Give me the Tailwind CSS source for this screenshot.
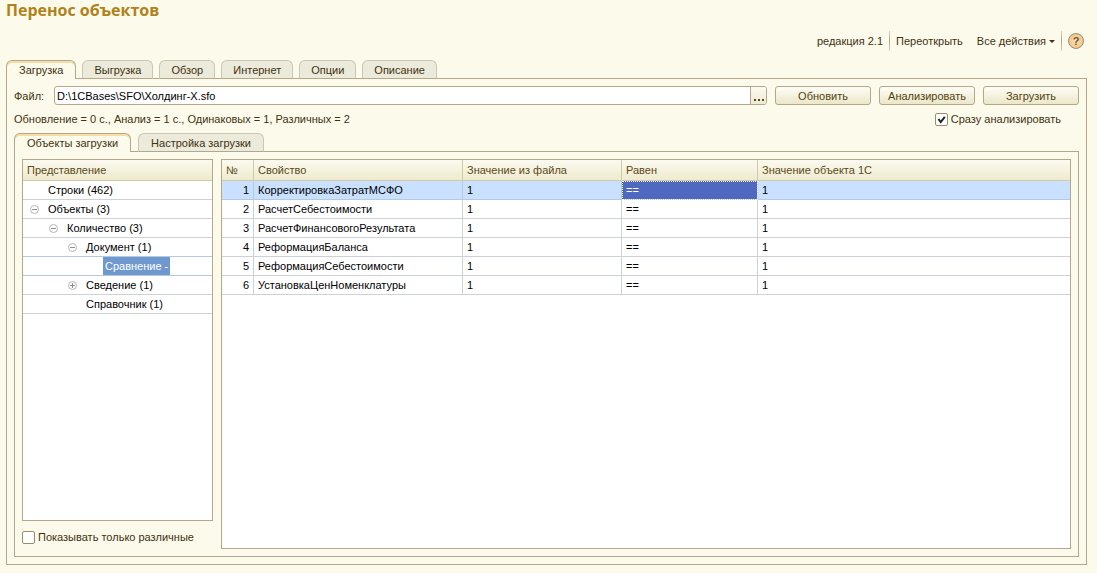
<!DOCTYPE html>
<html lang="ru">
<head>
    <meta charset="UTF-8">
    <meta name="viewport" content="width=device-width, initial-scale=1.0">
    <title>Перенос объектов</title>
    <script src="https://cdn.jsdelivr.net/npm/@tailwindcss/browser@4"></script>
</head>
<body class="bg-[#fcfaeb] font-['Liberation_Sans',Arial,sans-serif] text-[11px] leading-4 text-[#3f3211]">
    <div class="min-h-screen flex flex-col pl-[6px] pr-[10px] pb-2">
        <h1 class="font-['Open_Sans',sans-serif] font-bold text-[16px] leading-5 text-[#b08219]">Перенос объектов</h1>

        <!-- Toolbar -->
        <div class="flex items-center justify-end h-5 mt-[11px]">
            <span>редакция 2.1</span>
            <span class="w-px h-5 mx-[6px] bg-linear-to-b from-[#d8d3bc] via-[#a9a184] to-[#d8d3bc]"></span>
            <button class="mr-[14px]">Переоткрыть</button>
            <button class="flex items-center gap-[3px]">
                Все действия
                <svg class="w-[6px] h-[3px]" viewBox="0 0 6 3"><path d="M0 0h6L3 3z" fill="#3f3211"/></svg>
            </button>
            <span class="w-px h-5 mx-[6px] bg-linear-to-b from-[#d8d3bc] via-[#a9a184] to-[#d8d3bc]"></span>
            <button aria-label="Справка" class="w-4 h-4 mr-[3px] flex items-center justify-center rounded-full border border-[#9c8f7c] bg-radial from-[#fde6bd] to-[#efb567] font-bold text-[11px] text-[#6b5338]">?</button>
        </div>

        <!-- Main tabs -->
        <div class="relative flex items-end gap-[6px] mt-[9px] -mb-px">
            <button class="h-[19px] px-3 rounded-t-md border border-b-0 border-[#b3a98a] bg-[#fcfaeb] shadow-[inset_0_2px_0_#f6dca6]">Загрузка</button>
            <button class="h-[19px] px-[11px] rounded-t-md border border-[#cbc6b0] border-b-[#b3a98a] bg-[#eceadb]">Выгрузка</button>
            <button class="h-[19px] px-[11px] rounded-t-md border border-[#cbc6b0] border-b-[#b3a98a] bg-[#eceadb]">Обзор</button>
            <button class="h-[19px] px-[11px] rounded-t-md border border-[#cbc6b0] border-b-[#b3a98a] bg-[#eceadb]">Интернет</button>
            <button class="h-[19px] px-[11px] rounded-t-md border border-[#cbc6b0] border-b-[#b3a98a] bg-[#eceadb]">Опции</button>
            <button class="h-[19px] px-[11px] rounded-t-md border border-[#cbc6b0] border-b-[#b3a98a] bg-[#eceadb]">Описание</button>
        </div>

        <div class="grow flex flex-col border border-[#b3a98a] p-[7px]">
            <div class="flex items-center gap-2">
                <div class="grow flex items-center gap-[10px]">
                    <label for="file">Файл:</label>
                    <div class="grow flex h-[19px] rounded-[3px] border border-[#b3a98a] bg-white overflow-hidden">
                        <input id="file" type="text" value="D:\1CBases\SFO\Холдинг-X.sfo" class="grow min-w-0 px-[2px] text-black outline-none">
                        <button aria-label="Выбрать файл" class="w-4 flex items-end justify-center pb-[3px] border-l border-[#b3a98a] bg-linear-to-b from-[#fcfaf0] to-[#eeebd2]">
                            <svg class="w-[10px] h-[2px]" viewBox="0 0 10 2"><path d="M0 0h2v2H0zM4 0h2v2H4zM8 0h2v2H8z" fill="#5a4a1a"/></svg>
                        </button>
                    </div>
                </div>
                <button class="w-24 h-[19px] rounded-[3px] border border-[#b3a98a] bg-linear-to-b from-[#fefdf6] to-[#ebe7c9] text-[#54430f]">Обновить</button>
                <button class="w-24 h-[19px] rounded-[3px] border border-[#b3a98a] bg-linear-to-b from-[#fefdf6] to-[#ebe7c9] text-[#54430f]">Анализировать</button>
                <button class="w-24 h-[19px] rounded-[3px] border border-[#b3a98a] bg-linear-to-b from-[#fefdf6] to-[#ebe7c9] text-[#54430f]">Загрузить</button>
            </div>

            <div class="flex items-center justify-between mt-[6px] pr-[18px]">
                <span>Обновление = 0 с., Анализ = 1 с., Одинаковых = 1, Различных = 2</span>
                <label class="flex items-center gap-[3px]">
                    <span class="grid">
                        <input type="checkbox" checked class="peer col-start-1 row-start-1 appearance-none w-[13px] h-[13px] rounded-[2px] border border-[#97906f] bg-white">
                        <svg class="col-start-1 row-start-1 hidden peer-checked:block w-[13px] h-[13px] pointer-events-none" viewBox="0 0 13 13"><path d="M3.5 6l2.2 3L9.8 3.8" fill="none" stroke="#222" stroke-width="2"/></svg>
                    </span>
                    Сразу анализировать
                </label>
            </div>

            <!-- Inner tabs -->
            <div class="relative flex items-end gap-[7px] mt-[6px] -mb-px">
                <button class="h-[19px] px-3 rounded-t-md border border-b-0 border-[#b3a98a] bg-[#fcfaeb] shadow-[inset_0_2px_0_#f6dca6]">Объекты загрузки</button>
                <button class="h-[19px] px-3 rounded-t-md border border-[#cbc6b0] border-b-[#b3a98a] bg-[#eceadb]">Настройка загрузки</button>
            </div>

            <div class="grow flex gap-2 border border-[#b3a98a] p-[7px]">
                <div class="w-[191px] shrink-0 flex flex-col">
                    <div class="grow border border-[#b3a98a] bg-white text-black">
                        <div class="h-[21px] px-1 leading-5 border-b border-[#cfc9ae] bg-linear-to-b from-[#fbfaf0] to-[#efeacb] text-[#5a4a1a]">Представление</div>
                        <ul>
                            <li class="flex items-center h-[19px] pl-[25px] border-b border-[#cdd2d8]">Строки (462)</li>
                            <li class="flex items-center gap-[9px] h-[19px] pl-[7px] border-b border-[#cdd2d8]">
                                <button aria-label="Свернуть"><svg class="w-[9px] h-[9px]" viewBox="0 0 9 9" fill="none" stroke="#8f8f8f"><circle cx="4.5" cy="4.5" r="4" stroke="#b4b4b4"/><path d="M2 4.5h5"/></svg></button>
                                Объекты (3)
                            </li>
                            <li class="flex items-center gap-[9px] h-[19px] pl-[26px] border-b border-[#cdd2d8]">
                                <button aria-label="Свернуть"><svg class="w-[9px] h-[9px]" viewBox="0 0 9 9" fill="none" stroke="#8f8f8f"><circle cx="4.5" cy="4.5" r="4" stroke="#b4b4b4"/><path d="M2 4.5h5"/></svg></button>
                                Количество (3)
                            </li>
                            <li class="flex items-center gap-[9px] h-[19px] pl-[45px] border-b border-[#b3cbe0]">
                                <button aria-label="Свернуть"><svg class="w-[9px] h-[9px]" viewBox="0 0 9 9" fill="none" stroke="#8f8f8f"><circle cx="4.5" cy="4.5" r="4" stroke="#b4b4b4"/><path d="M2 4.5h5"/></svg></button>
                                Документ (1)
                            </li>
                            <li class="flex items-center h-[19px] pl-20 border-b border-[#b3cbe0]"><span class="h-[18px] px-[2px] leading-[18px] bg-[#6f98cf] text-white">Сравнение -</span></li>
                            <li class="flex items-center gap-[9px] h-[19px] pl-[45px] border-b border-[#cdd2d8]">
                                <button aria-label="Развернуть"><svg class="w-[9px] h-[9px]" viewBox="0 0 9 9" fill="none" stroke="#8f8f8f"><circle cx="4.5" cy="4.5" r="4" stroke="#b4b4b4"/><path d="M2 4.5h5M4.5 2v5"/></svg></button>
                                Сведение (1)
                            </li>
                            <li class="flex items-center h-[19px] pl-[63px] border-b border-[#cdd2d8]">Справочник (1)</li>
                        </ul>
                    </div>
                    <label class="flex items-center gap-[3px] mt-2 mb-1">
                        <input type="checkbox" class="appearance-none w-[13px] h-[13px] rounded-[2px] border border-[#97906f] bg-white">
                        Показывать только различные
                    </label>
                </div>

                <div class="grow border border-[#b3a98a] bg-white text-black">
                    <table class="w-full table-fixed border-separate border-spacing-0">
                        <colgroup>
                            <col class="w-8">
                            <col class="w-[209px]">
                            <col class="w-[159px]">
                            <col class="w-[136px]">
                            <col>
                        </colgroup>
                        <thead class="text-left text-[#5a4a1a]">
                            <tr class="h-[21px] bg-linear-to-b from-[#fbfaf0] to-[#efeacb] *:font-normal *:p-0 *:pl-1 *:border-b *:border-[#cfc9ae]">
                                <th class="border-r">№</th>
                                <th class="border-r">Свойство</th>
                                <th class="border-r">Значение из файла</th>
                                <th class="border-r">Равен</th>
                                <th>Значение объекта 1С</th>
                            </tr>
                        </thead>
                        <tbody>
                            <tr class="h-[19px] bg-[#c9e1fe] *:px-1 *:border-b *:border-[#b3cbe0]">
                                <td class="text-right border-r">1</td>
                                <td class="border-r">КорректировкаЗатратМСФО</td>
                                <td class="border-r">1</td>
                                <td class="border-r bg-[#5069c0] text-white outline-1 outline-dotted outline-white -outline-offset-1">==</td>
                                <td>1</td>
                            </tr>
                            <tr class="h-[19px] *:px-1 *:border-b *:border-[#cdd2d8]">
                                <td class="text-right border-r">2</td>
                                <td class="border-r">РасчетСебестоимости</td>
                                <td class="border-r">1</td>
                                <td class="border-r">==</td>
                                <td>1</td>
                            </tr>
                            <tr class="h-[19px] *:px-1 *:border-b *:border-[#cdd2d8]">
                                <td class="text-right border-r">3</td>
                                <td class="border-r">РасчетФинансовогоРезультата</td>
                                <td class="border-r">1</td>
                                <td class="border-r">==</td>
                                <td>1</td>
                            </tr>
                            <tr class="h-[19px] *:px-1 *:border-b *:border-[#cdd2d8]">
                                <td class="text-right border-r">4</td>
                                <td class="border-r">РеформацияБаланса</td>
                                <td class="border-r">1</td>
                                <td class="border-r">==</td>
                                <td>1</td>
                            </tr>
                            <tr class="h-[19px] *:px-1 *:border-b *:border-[#cdd2d8]">
                                <td class="text-right border-r">5</td>
                                <td class="border-r">РеформацияСебестоимости</td>
                                <td class="border-r">1</td>
                                <td class="border-r">==</td>
                                <td>1</td>
                            </tr>
                            <tr class="h-[19px] *:px-1 *:border-b *:border-[#cdd2d8]">
                                <td class="text-right border-r">6</td>
                                <td class="border-r">УстановкаЦенНоменклатуры</td>
                                <td class="border-r">1</td>
                                <td class="border-r">==</td>
                                <td>1</td>
                            </tr>
                        </tbody>
                    </table>
                </div>
            </div>
        </div>
    </div>
</body>
</html>
